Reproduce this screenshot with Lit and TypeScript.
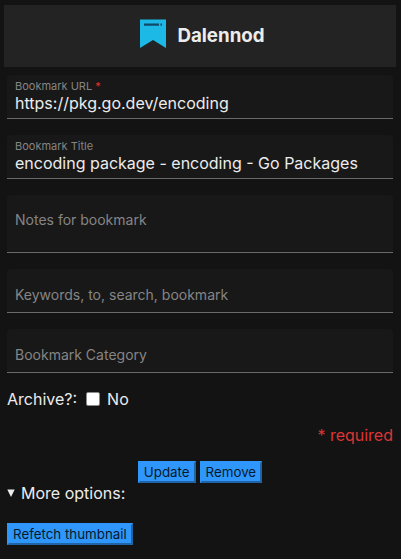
import { LitElement, html, css, nothing } from "lit";
import { customElement, property, state } from "lit/decorators.js";

@customElement("text-field")
class TextField extends LitElement {
  @property() label = "";
  @property() value = "";
  @property() placeholder = "";
  @property({ type: Boolean }) required = false;
  @property({ type: Boolean }) multiline = false;

  static styles = css`
    :host {
      display: block;
    }
    .field {
      display: flex;
      flex-direction: column;
      box-sizing: border-box;
      background: #181818;
      border-bottom: 1px solid #6a6a6a;
      border-radius: 4px 4px 0 0;
    }
    .label {
      padding: 5px 8px 0;
      font-size: 11px;
      line-height: 13px;
      color: #858585;
    }
    .star {
      color: #dc3535;
    }
    .control {
      display: block;
      box-sizing: border-box;
      width: 100%;
      margin: 0;
      border: 0;
      outline: 0;
      background: transparent;
      color: #ececec;
      font: inherit;
      line-height: 20px;
      height: 43px;
      padding: 15px 8px 8px;
      resize: none;
      overflow: hidden;
    }
    .labelled {
      height: 25px;
      padding: 0 8px 5px;
    }
    .area {
      height: 57px;
      padding: 15px 8px;
    }
    .control::placeholder {
      color: #858585;
      font-size: 14px;
      opacity: 1;
    }
  `;

  render() {
    if (this.multiline) {
      return html`<div class="field">
        <textarea class="control area" aria-label=${this.placeholder} placeholder=${this.placeholder}></textarea>
      </div>`;
    }
    if (this.label) {
      return html`<div class="field">
        <label class="label" for="control"
          >${this.label}${this.required ? html` <span class="star">*</span>` : nothing}</label
        >
        <input id="control" class="control labelled" type="text" .value=${this.value} ?required=${this.required} />
      </div>`;
    }
    return html`<div class="field">
      <input class="control" type="text" aria-label=${this.placeholder} placeholder=${this.placeholder} />
    </div>`;
  }
}

@customElement("app-root")
class AppRoot extends LitElement {
  @state() private archived = false;

  static styles = css`
    :host {
      display: block;
      box-sizing: border-box;
      min-height: 100vh;
      padding: 5px 5px 14px 4px;
      background: #131313;
      color: #ececec;
      font-family: Inter, "Liberation Sans", sans-serif;
      font-size: 16px;
      line-height: 20px;
    }
    .header {
      display: flex;
      justify-content: center;
      align-items: center;
      gap: 10px;
      height: 62px;
      background: #232323;
    }
    .logo {
      display: block;
      width: 32px;
      height: 30px;
      margin-bottom: 4px;
    }
    .name {
      margin: 0;
      font-weight: 700;
      line-height: 24px;
    }
    .form {
      display: flex;
      flex-direction: column;
      gap: 16px;
      padding: 8px 3px 0;
    }
    .archive {
      display: flex;
      align-items: center;
    }
    .check {
      appearance: none;
      width: 14px;
      height: 14px;
      margin: 0 7px 0 9px;
      border: 1px solid #8a8a8a;
      border-radius: 2px;
      background: #fff;
    }
    .check:checked {
      background: #2f97fb;
    }
    .required {
      margin: 0;
      text-align: right;
      color: #dc3535;
    }
    .actions {
      display: flex;
      justify-content: center;
      gap: 4px;
    }
    .button {
      box-sizing: border-box;
      height: 22px;
      margin: 0;
      padding: 0 4px;
      border: 2px outset #2f97fb;
      background: #2f97fb;
      color: #06182c;
      font-family: inherit;
      line-height: 18px;
    }
    .more {
      padding: 0 3px;
    }
    .summary {
      display: flex;
      align-items: center;
      gap: 6px;
      cursor: pointer;
    }
    .marker {
      width: 8px;
      height: 8px;
      fill: currentColor;
      transform: rotate(-90deg);
    }
    .more[open] .marker {
      transform: none;
    }
    .extra {
      padding-top: 20px;
    }
  `;

  render() {
    return html`
      <header class="header">
        <svg class="logo" viewBox="0 0 32 30" aria-hidden="true">
          <path d="M5 0.5H31V29L18 21L5 29Z" fill="#1cb9e6" />
          <path d="M9 5.7H24M25.5 5.7H27" stroke="#11496b" stroke-width="2.2" />
        </svg>
        <h3 class="name">Dalennod</h3>
      </header>
      <form class="form" @submit=${(e: Event) => e.preventDefault()}>
        <text-field label="Bookmark URL" value="https://pkg.go.dev/encoding" required></text-field>
        <text-field label="Bookmark Title" value="encoding package - encoding - Go Packages"></text-field>
        <text-field placeholder="Notes for bookmark" multiline></text-field>
        <text-field placeholder="Keywords, to, search, bookmark"></text-field>
        <text-field placeholder="Bookmark Category"></text-field>
        <div class="archive">
          <label for="archive">Archive?:</label>
          <input
            id="archive"
            class="check"
            type="checkbox"
            .checked=${this.archived}
            @change=${(e: Event) => (this.archived = (e.target as HTMLInputElement).checked)}
          />
          <label for="archive">${this.archived ? "Yes" : "No"}</label>
        </div>
        <p class="required">* required</p>
        <div class="actions">
          <button class="button" type="submit">Update</button>
          <button class="button" type="button">Remove</button>
        </div>
      </form>
      <details class="more" open>
        <summary class="summary">
          <svg class="marker" viewBox="0 0 8 8" aria-hidden="true"><path d="M0.3 0.5H7.7L4 8Z" /></svg>
          <span>More options:</span>
        </summary>
        <div class="extra"><button class="button" type="button">Refetch thumbnail</button></div>
      </details>
    `;
  }
}
